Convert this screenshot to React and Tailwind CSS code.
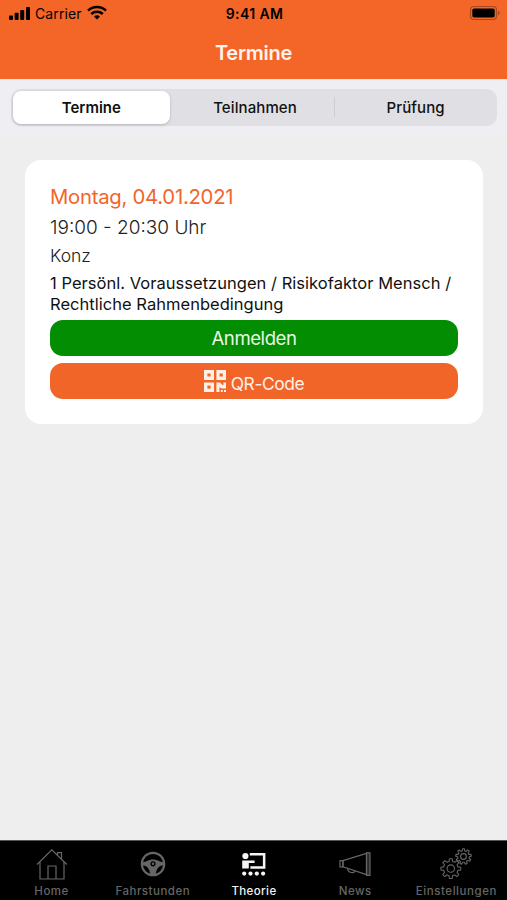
import { useState } from 'react'

const segments = ['Termine', 'Teilnahmen', 'Prüfung']

// closed outline of a cog wheel around (cx, cy)
function gearPath(cx, cy, outer, inner, teeth) {
  const step = (Math.PI * 2) / teeth
  const points = []
  for (let i = 0; i < teeth; i++) {
    const a = i * step - Math.PI / 2
    const corners = [[inner, -0.3], [outer, -0.18], [outer, 0.18], [inner, 0.3]]
    corners.forEach(([r, o]) => {
      points.push(`${(cx + r * Math.cos(a + o * step)).toFixed(2)} ${(cy + r * Math.sin(a + o * step)).toFixed(2)}`)
    })
  }
  return `M${points.join('L')}Z`
}

function HomeIcon() {
  return (
    <svg className="h-8 w-8" viewBox="0 0 32 32" fill="none" stroke="currentColor" strokeWidth="1.2">
      <path d="M1 16.5L15.8 1.8L30.8 16.5" />
      <path d="M4 14V31H28V14" />
      <path d="M12 31V18H20V31" />
      <path d="M21.5 7.2V4.6H25.5V11.2" />
    </svg>
  )
}

function WheelIcon() {
  return (
    <svg className="h-8 w-8" viewBox="0 0 32 32" fill="none" stroke="currentColor">
      <circle cx="16" cy="16" r="11.2" strokeWidth="2.2" />
      <path
        d="M5.5 14.2C9.5 14 11.6 11.4 16 11.4S22.5 14 26.5 14.2V17.2C22 17.4 19.4 20.6 18.6 26.6H13.4C12.6 20.6 10 17.4 5.5 17.2Z"
        fill="currentColor"
        stroke="none"
      />
      <circle cx="16" cy="15.8" r="2.6" className="fill-black" stroke="none" />
      <circle cx="16" cy="15.8" r="1.2" fill="currentColor" stroke="none" />
    </svg>
  )
}

function TheoryIcon() {
  return (
    <svg className="h-8 w-8" viewBox="0 0 32 32" fill="currentColor">
      <circle cx="7.4" cy="8" r="3.1" />
      <path d="M4.2 12.4H16.6V15.1H10.8V20.4H4.2Z" />
      <path d="M11.8 5.1H27.4V20.8H12.4V18.2H24.9V7.4H11.8Z" />
      <circle cx="6.2" cy="25.6" r="2.1" />
      <circle cx="12.5" cy="25.6" r="2.1" />
      <circle cx="18.8" cy="25.6" r="2.1" />
      <circle cx="25.1" cy="25.6" r="2.1" />
    </svg>
  )
}

function NewsIcon() {
  return (
    <svg className="h-8 w-8" viewBox="0 0 32 32" fill="none" stroke="currentColor" strokeWidth="1.2">
      <path d="M1 12.6H4V18.8H1Z" />
      <path d="M4 12.6L27.5 5.4V26.6L4 18.8Z" />
      <path d="M27.5 4.8H31V27.4H27.5Z" fill="currentColor" fillOpacity="0.4" />
      <path d="M8.6 20.6C8.8 25.4 15.4 25.4 16 22.8" />
    </svg>
  )
}

function SettingsIcon() {
  return (
    <svg className="h-8 w-8" viewBox="0 0 32 32" fill="none" stroke="currentColor" strokeWidth="1.1" strokeLinejoin="round">
      <path d={gearPath(10.8, 20.6, 10, 7.4, 8)} />
      <circle cx="10.8" cy="20.6" r="3.7" />
      <path d={gearPath(23.5, 8.5, 7.8, 5.8, 9)} />
      <circle cx="23.5" cy="8.5" r="2.9" />
    </svg>
  )
}

const tabs = [
  { label: 'Home', Icon: HomeIcon, spacing: 'tracking-[0.5px]' },
  { label: 'Fahrstunden', Icon: WheelIcon, spacing: 'tracking-[0.5px]' },
  { label: 'Theorie', Icon: TheoryIcon, spacing: 'tracking-[0.4px]' },
  { label: 'News', Icon: NewsIcon, spacing: 'tracking-[0.5px]' },
  { label: 'Einstellungen', Icon: SettingsIcon, spacing: 'tracking-[0.55px]' },
]

function StatusBar() {
  return (
    <div className="grid h-7 grid-cols-3 items-center pl-2 pr-1.5 text-black">
      <div className="flex items-center pb-0.5">
        <svg className="h-4 w-6" viewBox="0 0 24 16" fill="currentColor">
          <rect x="1" y="10.4" width="4" height="4.6" rx="1" />
          <rect x="6.6" y="7.8" width="4" height="7.2" rx="1" />
          <rect x="12.2" y="5" width="4" height="10" rx="1" />
          <rect x="18" y="2" width="4" height="13" rx="1" />
        </svg>
        <span className="ml-[3px] text-[14px] tracking-[0.1px]">Carrier</span>
        <svg className="ml-[5px] h-4 w-5" viewBox="0 0 20 16" fill="none" stroke="currentColor" strokeWidth="2.5">
          <path d="M1 5.6C6 0.9 14 0.9 19 5.6" />
          <path d="M4.2 9C7.4 6.1 12.6 6.1 15.8 9" />
          <path d="M7 11.4C8.8 9.9 11.2 9.9 13 11.4L10 14.6Z" fill="currentColor" stroke="none" />
        </svg>
      </div>
      <span className="pb-0.5 text-center text-[14px] font-semibold tracking-[0.4px]">9:41 AM</span>
      <svg className="mb-0.5 h-4 w-8 justify-self-end" viewBox="0 0 32 16">
        <rect x="1.5" y="1.5" width="26" height="13" rx="3.5" fill="none" stroke="#a8481c" strokeWidth="1.2" />
        <rect x="3.3" y="3.4" width="22.4" height="9.2" rx="1.8" fill="#000" />
        <path d="M29 5.8C31.2 6.6 31.2 9.4 29 10.2Z" fill="#a8481c" />
      </svg>
    </div>
  )
}

function QrIcon() {
  return (
    <svg className="h-[22px] w-[22px]" viewBox="0 0 22 22" fill="currentColor">
      <path fillRule="evenodd" d="M0 0H10V10H0ZM3.4 3.4V6.6H6.6V3.4Z" />
      <path fillRule="evenodd" d="M12.4 0H22V10H12.4ZM15.6 3.4V6.6H18.8V3.4Z" />
      <path fillRule="evenodd" d="M0 12.4H10V22H0ZM3.4 15.6V18.8H6.6V15.6Z" />
      <path d="M12.4 12.4H16L18.6 15H19.4V12.4H22V18.4H17.4L15.4 17V22H12.4Z" />
      <path d="M16.8 20H18.8V22H16.8ZM20 20H22V22H20Z" />
    </svg>
  )
}

function AppointmentCard() {
  return (
    <div className="ml-[25px] mr-6 mt-[25px] h-[264px] rounded-2xl bg-white px-[25px] pt-[22px]">
      <h2 className="h-[30px] text-[20.3px] leading-[30px] tracking-[-0.25px] text-[#f26529]">Montag, 04.01.2021</h2>
      <p className="h-[30px] text-[19px] font-light leading-[31px] text-[#222]">19:00 - 20:30 Uhr</p>
      <p className="h-7 text-[17.5px] font-light leading-7 text-[#222]">Konz</p>
      <p className="mb-[6px] mt-[3px] whitespace-nowrap text-[16.5px] leading-[20.5px] tracking-[0.03px] text-[#111]">
        1 Persönl. Voraussetzungen / Risikofaktor Mensch /
        <br />
        Rechtliche Rahmenbedingung
      </p>
      <button className="flex h-9 w-full items-center justify-center rounded-[13px] bg-[#028d02] pt-0.5 text-[18.6px] tracking-[-0.45px] text-[#eaf6e6]">
        Anmelden
      </button>
      <button className="mt-[7px] flex h-9 w-full items-center justify-center gap-[5px] rounded-[13px] bg-[#f26529] text-[17.4px] tracking-[-0.4px] text-[#fff0e8]">
        <QrIcon />
        <span className="pt-1.5">QR-Code</span>
      </button>
    </div>
  )
}

export default function App() {
  const [segment, setSegment] = useState('Termine')
  const [activeTab, setActiveTab] = useState('Theorie')

  return (
    <div className="flex h-[900px] w-[507px] flex-col overflow-hidden bg-[#eeeeee] font-[Inter,sans-serif]">
      <header className="h-[79px] bg-[#f46627]">
        <StatusBar />
        <h1 className="pt-[10px] text-center text-[20px] font-semibold leading-[30px] tracking-[-0.25px] text-[#fff4ee]">Termine</h1>
      </header>

      {/* Segmented control */}
      <div className="h-14 border-t border-[#fbe0d8] bg-[#efeef3] pl-[11px] pr-2.5 pt-[9px]">
        <div className="grid h-[37px] grid-cols-3 rounded-[10px] bg-[#e0dfe4] p-0.5">
          {segments.map((s, i) => (
            <button
              key={s}
              onClick={() => setSegment(s)}
              className={
                'relative pt-0.5 text-[15px] text-[#111] ' +
                (s === segment
                  ? 'mr-1 rounded-lg bg-white font-semibold shadow-[0_1px_3px_rgba(0,0,0,0.2)]'
                  : 'pl-0.5 font-medium tracking-[0.1px]')
              }
            >
              {s}
              {i === 2 && <span className="absolute left-0 top-1.5 h-5 w-px bg-[#cdccd2]" />}
            </button>
          ))}
        </div>
      </div>

      <main className="flex-1">
        <AppointmentCard />
      </main>

      <nav className="grid h-[60px] grid-cols-5 border-t border-[#555] bg-black pl-px">
        {tabs.map(({ label, Icon, spacing }) => (
          <button
            key={label}
            onClick={() => setActiveTab(label)}
            className={
              'flex flex-col items-center pt-[7px] ' + (label === activeTab ? 'text-[#f5f5f5]' : 'text-[#666]')
            }
          >
            <Icon />
            <span className={'mt-[3px] text-[11.5px] font-medium leading-4 ' + spacing}>{label}</span>
          </button>
        ))}
      </nav>
    </div>
  )
}
